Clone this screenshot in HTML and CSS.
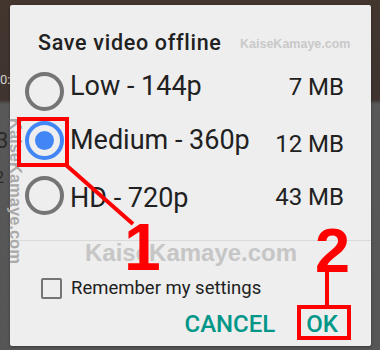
FILE: index.html
```html
<!DOCTYPE html>
<html>
<head>
<meta charset="utf-8">
<link rel="stylesheet" href="styles.css">
</head>
<body>
<div class="screen">
  <div class="bg-glyph g-a">0:</div>
  <div class="bg-glyph g-b">3</div>
  <div class="bg-glyph g-c">2</div>
  <div class="dialog">
    <h1 class="title">Save video offline</h1>
    <div class="options">
      <div class="opt opt-1"><span class="radio"></span><span class="label">Low - 144p</span><span class="size">7 MB</span></div>
      <div class="opt opt-2"><span class="radio checked"></span><span class="label">Medium - 360p</span><span class="size">12 MB</span></div>
      <div class="opt opt-3"><span class="radio"></span><span class="label">HD - 720p</span><span class="size">43 MB</span></div>
    </div>
    <div class="divider"></div>
    <div class="remember"><span class="checkbox"></span><span class="remember-text">Remember my settings</span></div>
    <div class="actions"><span class="btn">CANCEL</span><span class="btn">OK</span></div>
  </div>

  <div class="wm wm-top">KaiseKamaye.com</div>
  <div class="wm wm-mid">KaiseKamaye.com</div>
  <div class="wm wm-side">KaiseKamaye.com</div>

  <div class="mark box-radio"></div>
  <div class="mark box-ok"></div>
  <svg class="lines" width="380" height="350" viewBox="0 0 380 350">
    <line x1="66" y1="165" x2="133" y2="224" stroke="#ff0000" stroke-width="4"/>
    <line x1="327" y1="272" x2="327" y2="306" stroke="#ff0000" stroke-width="4"/>
  </svg>
  <div class="num num-1">1</div>
  <div class="num num-2">2</div>
</div>
</body>
</html>
```

FILE: styles.css
```css
* { box-sizing: border-box; }
html, body { margin: 0; padding: 0; }
body {
  width: 380px;
  height: 350px;
  overflow: hidden;
  font-family: Roboto, "Noto Sans", sans-serif;
}
.screen {
  position: relative;
  width: 380px;
  height: 350px;
  background: linear-gradient(to bottom, #43362f 0, #3f3430 100px, #585858 104px, #565656 100%);
  padding: 5px 9px 0 10px;
}
.bg-glyph {
  position: absolute;
  color: #2a2a2a;
  font-size: 22px;
  font-family: Roboto, sans-serif;
}
.g-a { left: 0; top: 72px; font-size: 13px; color: #cfcfcf; }
.g-b { left: -4px; top: 128px; }
.g-c { left: -5px; top: 168px; font-size: 16px; }

.dialog {
  width: 361px;
  height: 341px;
  background: #eeeeee;
  border-radius: 2px;
  box-shadow: 0 1px 3px rgba(0,0,0,0.35);
  padding-top: 25px;
  color: #212121;
}
.title {
  margin: 0 0 12px 0;
  padding-left: 28px;
  font-size: 21.5px;
  line-height: 25px;
  letter-spacing: 0.7px;
  font-weight: 500;
}
.options { display: flex; flex-direction: column; }
.opt {
  display: flex;
  align-items: center;
  padding: 0 27px 0 15px;
}
.opt-1 { height: 48px; }
.opt-2 { height: 50px; }
.opt-3 { height: 60px; }
.radio {
  width: 39px;
  height: 39px;
  border: 4px solid #757575;
  border-radius: 50%;
  flex: none;
  display: flex;
  align-items: center;
  justify-content: center;
}
.radio.checked { border-color: #4285f4; }
.radio.checked::after {
  content: "";
  width: 19px;
  height: 19px;
  border-radius: 50%;
  background: #4285f4;
}
.label {
  flex: 1;
  margin-left: 6px;
  font-size: 27px;
  line-height: 32px;
}
.size {
  font-size: 24px;
  line-height: 28px;
}
.opt-1 .label { margin-bottom: 10px; }
.opt-1 .size { margin-bottom: 8px; }
.opt-2 .size { margin-top: 8px; }
.opt-3 .label { margin-top: 6px; }
.opt-3 .size { margin-top: 4px; }

.divider {
  height: 1px;
  background: #dadada;
  margin-top: 15px;
}
.remember {
  display: flex;
  align-items: center;
  margin-top: 36px;
  padding-left: 31px;
  height: 22px;
}
.checkbox {
  width: 21px;
  height: 21px;
  border: 2px solid #757575;
  border-radius: 2px;
  flex: none;
}
.remember-text {
  margin-left: 9px;
  font-size: 18.5px;
  line-height: 22px;
}
.actions {
  display: flex;
  justify-content: flex-end;
  gap: 31px;
  margin-top: 11px;
  padding-right: 33px;
}
.btn {
  font-size: 24px;
  line-height: 28px;
  font-weight: 500;
  color: #009688;
}

.wm {
  position: absolute;
  font-family: "Liberation Sans", Arial, sans-serif;
  font-weight: bold;
  white-space: nowrap;
  line-height: 1;
}
.wm-top { left: 240px; top: 38px; font-size: 12.5px; color: #c9c9c9; }
.wm-mid { left: 85px; top: 241px; font-size: 24px; color: #c6c6c6; }
.wm-side {
  left: 24px;
  top: 118px;
  font-size: 16.5px;
  color: #a9a9a9;
  transform-origin: 0 0;
  transform: rotate(90deg);
}

.mark {
  position: absolute;
  border: 4px solid #ff0000;
}
.box-radio { left: 17px; top: 117px; width: 52px; height: 50px; }
.box-ok { left: 297px; top: 305px; width: 54px; height: 35px; }
.lines { position: absolute; left: 0; top: 0; }
.num {
  position: absolute;
  font-family: "Liberation Sans", Arial, sans-serif;
  font-weight: bold;
  color: #ff0000;
  line-height: 1;
}
.num-1 { left: 124px; top: 214px; font-size: 66px; }
.num-2 { left: 315px; top: 219px; font-size: 63px; }
```
